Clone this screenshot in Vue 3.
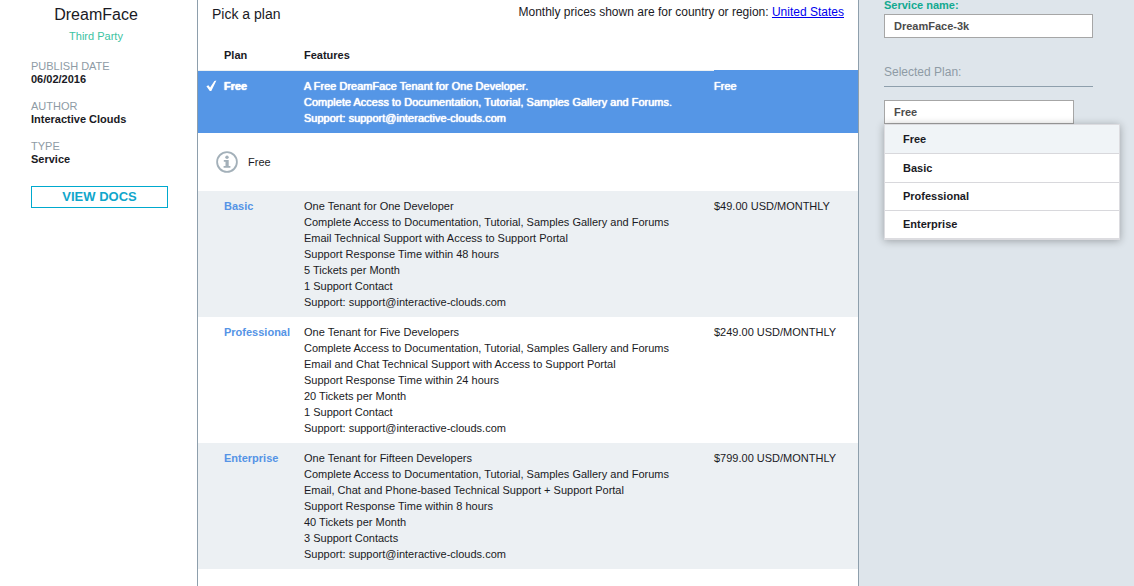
<script setup>
import { ref, computed } from 'vue'

const plans = [
  {
    name: 'Free',
    price: 'Free',
    features: [
      'A Free DreamFace Tenant for One Developer.',
      'Complete Access to Documentation, Tutorial, Samples Gallery and Forums.',
      'Support: support@interactive-clouds.com',
    ],
  },
  {
    name: 'Basic',
    price: '$49.00 USD/MONTHLY',
    features: [
      'One Tenant for One Developer',
      'Complete Access to Documentation, Tutorial, Samples Gallery and Forums',
      'Email Technical Support with Access to Support Portal',
      'Support Response Time within 48 hours',
      '5 Tickets per Month',
      '1 Support Contact',
      'Support: support@interactive-clouds.com',
    ],
  },
  {
    name: 'Professional',
    price: '$249.00 USD/MONTHLY',
    features: [
      'One Tenant for Five Developers',
      'Complete Access to Documentation, Tutorial, Samples Gallery and Forums',
      'Email and Chat Technical Support with Access to Support Portal',
      'Support Response Time within 24 hours',
      '20 Tickets per Month',
      '1 Support Contact',
      'Support: support@interactive-clouds.com',
    ],
  },
  {
    name: 'Enterprise',
    price: '$799.00 USD/MONTHLY',
    features: [
      'One Tenant for Fifteen Developers',
      'Complete Access to Documentation, Tutorial, Samples Gallery and Forums',
      'Email, Chat and Phone-based Technical Support + Support Portal',
      'Support Response Time within 8 hours',
      '40 Tickets per Month',
      '3 Support Contacts',
      'Support: support@interactive-clouds.com',
    ],
  },
]

const details = [
  { term: 'PUBLISH DATE', value: '06/02/2016' },
  { term: 'AUTHOR', value: 'Interactive Clouds' },
  { term: 'TYPE', value: 'Service' },
]

const selected = ref('Free')
const serviceName = ref('DreamFace-3k')
const selectedPlan = computed(() => plans.find((p) => p.name === selected.value))
</script>

<template>
  <div class="page">
    <aside class="about">
      <h1>DreamFace</h1>
      <p class="vendor">Third Party</p>
      <dl>
        <div v-for="d in details" :key="d.term" class="detail">
          <dt>{{ d.term }}</dt>
          <dd>{{ d.value }}</dd>
        </div>
      </dl>
      <button type="button" class="docs">VIEW DOCS</button>
    </aside>

    <main class="plans">
      <header class="top">
        <h2>Pick a plan</h2>
        <p>Monthly prices shown are for country or region: <a href="#region">United States</a></p>
      </header>
      <table>
        <colgroup>
          <col class="c-check" />
          <col class="c-plan" />
          <col />
          <col class="c-price" />
        </colgroup>
        <thead>
          <tr>
            <td></td>
            <th scope="col">Plan</th>
            <th scope="col">Features</th>
            <td></td>
          </tr>
        </thead>
        <tbody>
          <template v-for="plan in plans" :key="plan.name">
            <tr class="plan" :class="{ chosen: plan.name === selected }" @click="selected = plan.name">
              <td class="check">
                <svg v-if="plan.name === selected" width="11" height="12" viewBox="0 0 11 12" aria-hidden="true">
                  <path d="M0.4 6.3L2.4 5.2L4.1 7.6L8.4 1L10.4 0.6L5.3 10.9H3.8Z" fill="#fff" />
                </svg>
              </td>
              <th scope="row">{{ plan.name }}</th>
              <td>
                <div v-for="f in plan.features" :key="f">{{ f }}</div>
              </td>
              <td class="price">{{ plan.price }}</td>
            </tr>
            <tr v-if="plan.name === selected" class="note">
              <td colspan="4">
                <div class="note-body">
                  <svg width="22" height="22" viewBox="0 0 22 22" aria-hidden="true">
                    <circle cx="11" cy="11" r="9.9" fill="none" stroke="#a3b0b9" stroke-width="1.8" />
                    <circle cx="11" cy="6.3" r="1.7" fill="#a3b0b9" />
                    <path d="M7.8 9H12.7V15H14.4V16.8H7.6V15H9.5V10.8H7.8Z" fill="#a3b0b9" />
                  </svg>
                  <span>{{ selectedPlan.price }}</span>
                </div>
              </td>
            </tr>
          </template>
        </tbody>
      </table>
    </main>

    <aside class="order">
      <label class="name-label" for="service-name">Service name:</label>
      <input id="service-name" v-model="serviceName" class="field" type="text" />
      <label class="plan-label" for="plan-select">Selected Plan:</label>
      <div class="picker">
        <select id="plan-select" v-model="selected" class="field">
          <option v-for="plan in plans" :key="plan.name">{{ plan.name }}</option>
        </select>
        <ul class="menu">
          <li v-for="plan in plans" :key="plan.name">
            <button type="button" :class="{ active: plan.name === selected }" @click="selected = plan.name">
              {{ plan.name }}
            </button>
          </li>
        </ul>
      </div>
    </aside>
  </div>
</template>

<style>
body {
  background: #fff;
}
</style>

<style scoped>
.page {
  display: grid;
  grid-template-columns: 197px minmax(0, 1fr) 275px;
  min-height: 100vh;
  box-sizing: border-box;
  font-family: "Liberation Sans", Arial, sans-serif;
  font-size: 11px;
  line-height: 16px;
  color: #1a1a24;
}
.page * {
  box-sizing: border-box;
}
h1,
h2,
p,
dl,
dd,
ul {
  margin: 0;
  padding: 0;
}
button,
input,
select {
  font: inherit;
  border-radius: 0;
}

.about {
  padding: 5px 29px 0 31px;
}
h1 {
  margin-right: 7px;
  font-size: 16px;
  line-height: 20px;
  font-weight: 400;
  text-align: center;
}
.vendor {
  margin: 3px 7px 0 0;
  color: #3cc3a2;
  text-align: center;
}
dl {
  margin-top: 16px;
}
.detail {
  margin-bottom: 14px;
  line-height: 13px;
}
dt {
  color: #8e9ba5;
}
dd {
  font-weight: 700;
}
.docs {
  display: block;
  width: 100%;
  height: 22px;
  margin-top: 20px;
  padding: 0;
  border: 1px solid #00a9ce;
  background: #fff;
  color: #10a6cb;
  font-size: 13px;
  font-weight: 700;
  line-height: 20px;
}

.plans {
  border: solid #8e9fac;
  border-width: 0 1px;
}
.top {
  display: flex;
  justify-content: space-between;
  padding: 4px 14px 0;
}
h2 {
  font-size: 14px;
  line-height: 20px;
  font-weight: 400;
}
.top p {
  font-size: 12px;
}
a {
  color: #00e;
}
table {
  width: 100%;
  margin-top: 16px;
  border-spacing: 0;
  table-layout: fixed;
}
.c-check {
  width: 26px;
}
.c-plan {
  width: 80px;
}
.c-price {
  width: 144px;
}
th,
td {
  padding: 7px 0;
  text-align: left;
  vertical-align: top;
}
.plan {
  cursor: pointer;
}
.plan th {
  color: #5594e6;
}
.plan:nth-child(odd) {
  background: #ecf0f3;
}
.plan.chosen {
  background: #5596e6;
  color: #fff;
  text-shadow: 0 0 1px #fff, 0 0 1px #fff;
}
.chosen th {
  color: #fff;
}
.chosen th,
.chosen td {
  border-top: 1px solid #edf1f3;
}
.chosen .price {
  border-top-color: #5596e6;
}
.check svg {
  display: block;
  margin: 2px 0 0 8px;
}
.note td {
  padding: 0;
}
.note-body {
  display: flex;
  align-items: center;
  gap: 10px;
  height: 58px;
  padding-left: 18px;
}

.order {
  padding: 0 41px 0 25px;
  background: #dee5eb;
}
.name-label {
  display: block;
  height: 14px;
  line-height: 11px;
  color: #12a990;
  font-weight: 700;
}
.field {
  display: block;
  width: 100%;
  height: 24px;
  padding: 0 9px;
  border: 1px solid #a6a6a6;
  background: #fff;
  color: #4c4c4c;
  font-weight: 700;
  appearance: none;
}
.plan-label {
  display: block;
  margin-top: 24px;
  padding-bottom: 3px;
  border-bottom: 1px solid #8e9fac;
  color: #8e9ba5;
  font-size: 12px;
  line-height: 21px;
}
.picker {
  position: relative;
  margin: 13px 19px 0 0;
}
.menu {
  position: absolute;
  top: 24px;
  left: 0;
  right: -46px;
  display: grid;
  grid-auto-rows: 1fr;
  height: 116px;
  border: 1px solid #dcdce0;
  border-bottom-width: 2px;
  background: #fff;
  box-shadow: 0 1px 8px rgba(0, 0, 0, 0.3);
  list-style: none;
}
.menu li + li {
  border-top: 1px solid #d8d8dc;
}
.menu button {
  display: block;
  width: 100%;
  height: 100%;
  padding: 0 18px;
  border: 0;
  background: #fff;
  color: #1a1a24;
  font-weight: 700;
  text-align: left;
}
.menu .active {
  background: #f0f4f7;
}
</style>
